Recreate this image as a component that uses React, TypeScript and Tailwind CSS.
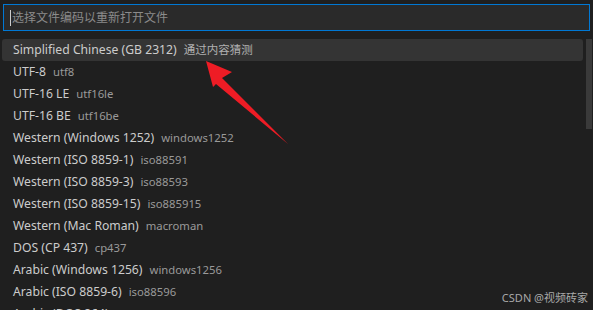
const items: [string, string][] = [
  ["UTF-8", "utf8"],
  ["UTF-16 LE", "utf16le"],
  ["UTF-16 BE", "utf16be"],
  ["Western (Windows 1252)", "windows1252"],
  ["Western (ISO 8859-1)", "iso88591"],
  ["Western (ISO 8859-3)", "iso88593"],
  ["Western (ISO 8859-15)", "iso885915"],
  ["Western (Mac Roman)", "macroman"],
  ["DOS (CP 437)", "cp437"],
  ["Arabic (Windows 1256)", "windows1256"],
  ["Arabic (ISO 8859-6)", "iso88596"],
  ["Arabic (DOS 864)", "cp864"],
];

function Row({ label, desc, active }: { label: string; desc: string; active?: boolean }) {
  return (
    <div
      className={
        "h-[22px] flex items-center pl-[11px] rounded-[3px] whitespace-nowrap " +
        (active ? "bg-[#343434]" : "")
      }
    >
      <span className="text-[12.2px] text-[#cccccc]">{label}</span>
      <span className={"ml-[7px] " + (active ? "text-[11.5px] text-[#b0b0b0]" : "text-[11.3px] text-[#9a9a9a]")}>
        {desc}
      </span>
    </div>
  );
}

export default function App() {
  return (
    <div
      className="w-[593px] h-[310px] bg-[#1f1f1f] overflow-hidden relative"
      style={{ fontFamily: '"Noto Sans", "Noto Sans CJK SC", sans-serif' }}
    >
      <div className="pt-[4px] pl-[3px] pr-[3px]">
        <div className="h-[27px] border border-[#0078d4] bg-[#2a2a2a] flex items-center pl-[6px]">
          <span className="w-px h-[16px] bg-[#cccccc]" />
          <span className="text-[12px] text-[#8b8b8b] ml-[1px]">选择文件编码以重新打开文件</span>
        </div>
      </div>
      <div className="flex mt-[8px]">
        <div className="flex-1 pl-[2px] pr-[3px]">
          <Row label="Simplified Chinese (GB 2312)" desc="通过内容猜测" active />
          {items.map(([l, d]) => (
            <Row key={l} label={l} desc={d} />
          ))}
        </div>
        <div className="w-[6px] h-[90px] bg-[#3a3a3a] mr-[1px]" />
      </div>

      <svg className="absolute left-0 top-0" width="593" height="310" viewBox="0 0 593 310">
        <polygon
          points="206,61 232,72 222,78 288,144 216,84 213,87"
          fill="#ee1c25"
        />
      </svg>

      <div className="absolute right-[5px] bottom-[4px] text-[11px] text-[#a8a8a8]">CSDN @视频砖家</div>
    </div>
  );
}
